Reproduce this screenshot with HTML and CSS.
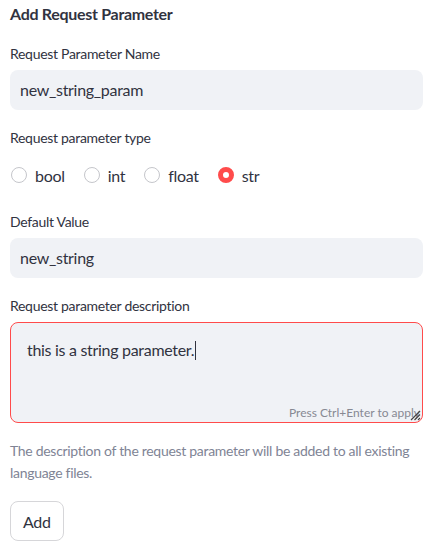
FILE: index.html
```html
<!DOCTYPE html>
<html>
<head>
<meta charset="utf-8">
<link rel="stylesheet" href="styles.css">
</head>
<body>
<div class="form">
  <div class="title">Add Request Parameter</div>

  <div class="label first">Request Parameter Name</div>
  <div class="input">new_string_param</div>

  <div class="label">Request parameter type</div>
  <div class="radios">
    <div class="radio"><span class="dot"></span><span>bool</span></div>
    <div class="radio"><span class="dot"></span><span>int</span></div>
    <div class="radio"><span class="dot"></span><span>float</span></div>
    <div class="radio checked"><span class="dot"></span><span>str</span></div>
  </div>

  <div class="label after-radios">Default Value</div>
  <div class="input">new_string</div>

  <div class="label">Request parameter description</div>
  <div class="textarea">
    <div class="ta-text">this is a string parameter.<span class="caret"></span></div>
    <div class="hint">Press Ctrl+Enter to apply</div>
    <svg class="grip" width="12" height="12" viewBox="0 0 12 12"><path d="M11 2 L2 11 M11 5.5 L5.5 11 M11 9 L9 11" stroke="#444" stroke-width="1.2" fill="none"/></svg>
  </div>

  <div class="help">The description of the request parameter will be added to all existing language files.</div>

  <button class="btn">Add</button>
</div>
</body>
</html>
```

FILE: styles.css
```css
* { box-sizing: border-box; }
body {
  margin: 0;
  background: #ffffff;
  font-family: Lato, "Open Sans", sans-serif;
  color: #31333f;
  letter-spacing: -0.3px;
}
.form {
  padding: 2px 10px 0 10px;
  display: flex;
  flex-direction: column;
  align-items: stretch;
}
.title {
  font-size: 16px;
  font-weight: 700;
  line-height: 24px;
}
.label {
  font-size: 14px;
  line-height: 20px;
  margin-top: 18px;
  margin-bottom: 6px;
}
.label.first { margin-top: 18px; }
.label.after-radios { margin-top: 25px; }
.input {
  height: 40px;
  background: #f0f2f6;
  border-radius: 8px;
  padding: 0 10px;
  font-size: 16px;
  line-height: 40px;
}
.radios {
  display: flex;
  align-items: center;
  height: 24px;
  margin-top: 9px;
  gap: 18px;
}
.radio {
  display: flex;
  align-items: center;
  gap: 8px;
  font-size: 16px;
}
.dot {
  width: 16px;
  height: 16px;
  border-radius: 50%;
  border: 1px solid #c5c6cb;
  background: #fff;
  margin-left: 1px;
}
.radio.checked .dot {
  border: 5px solid #ff4b4b;
  background: #fff;
}
.textarea {
  position: relative;
  height: 101px;
  background: #f0f2f6;
  border: 1px solid #ff4b4b;
  border-radius: 8px;
  padding: 15px 16px;
}
.ta-text {
  font-size: 16px;
  line-height: 24px;
}
.caret {
  display: inline-block;
  width: 1px;
  height: 19px;
  background: #31333f;
  vertical-align: -4px;
  margin-left: 1px;
}
.hint {
  position: absolute;
  right: 2px;
  bottom: 1px;
  font-size: 12px;
  line-height: 16px;
  letter-spacing: 0;
  color: #878993;
}
.grip {
  position: absolute;
  right: 1px;
  bottom: 1px;
}
.help {
  margin-top: 17px;
  font-size: 14px;
  line-height: 22px;
  color: #808495;
}
.btn {
  align-self: flex-start;
  margin-top: 17px;
  height: 40px;
  padding: 0 12px;
  background: #fff;
  border: 1px solid #d6d6d9;
  border-radius: 8px;
  font-family: inherit;
  letter-spacing: inherit;
  font-size: 16px;
  color: #31333f;
}
```
